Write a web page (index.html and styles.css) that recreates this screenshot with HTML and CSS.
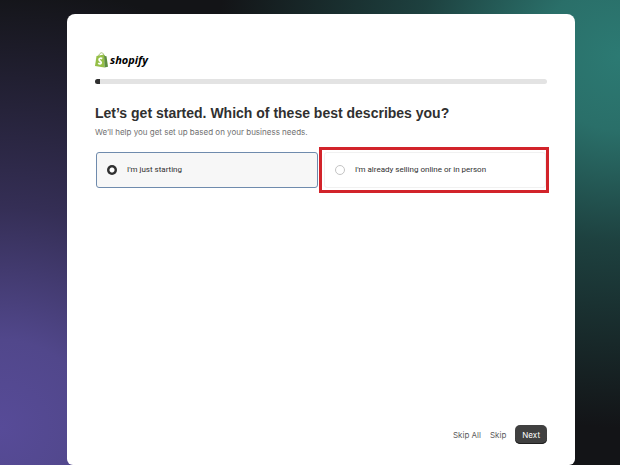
FILE: index.html
```
<!DOCTYPE html>
<html lang="en">
<head>
  <meta charset="utf-8">
  <meta name="viewport" content="width=device-width, initial-scale=1">
  <title>Shopify setup</title>
  <link rel="stylesheet" href="styles.css">
</head>
<body>
  <main class="card">
    <header class="brand">
      <svg class="brand-bag" viewBox="0 0 26 32" aria-hidden="true">
        <path d="M7 9C8 4 11 1.500 13.500 1.500S17 4 17.500 8" fill="none" stroke="#8fb052" stroke-width="1.500"/>
        <path d="M3 8L18 5L19 31L0 28Z" fill="#95bf47"/>
        <path d="M18 5L20 8L23 8.500L26 29.500L19 31Z" fill="#5e8e3e"/>
        <path d="M14.500 13.200C10.500 11.300 7.500 13.500 8.300 16C9 18.500 13 18.800 12.500 21.800C12 24.500 8.500 24 6.500 22.300" fill="none" stroke="#fff" stroke-width="3.500"/>
      </svg>
      <span class="brand-name">shopify</span>
    </header>
    <div class="progress" role="progressbar" aria-label="Setup progress" aria-valuenow="1" aria-valuemin="0" aria-valuemax="100"><div class="progress-fill"></div></div>
    <h1 class="title">Let’s get started. Which of these best describes you?</h1>
    <p class="subtitle">We’ll help you get set up based on your business needs.</p>
    <form class="form">
      <div class="options">
        <label class="option option-selected">
          <input class="radio" type="radio" name="stage" value="new" checked>
          <span>I'm just starting</span>
        </label>
        <label class="option option-highlighted">
          <input class="radio" type="radio" name="stage" value="selling">
          <span>I'm already selling online or in person</span>
        </label>
      </div>
      <footer class="actions">
        <button class="link-button" type="button">Skip All</button>
        <button class="link-button" type="button">Skip</button>
        <button class="next-button" type="button">Next</button>
      </footer>
    </form>
  </main>
</body>
</html>
```
FILE: styles.css
```
* {
  box-sizing: border-box;
}

body {
  margin: 0;
  min-height: 100vh;
  padding: 14px 45px 0 67px;
  display: flex;
  font-family: Inter, "Liberation Sans", sans-serif;
  font-size: 8px;
  line-height: 12px;
  color: #303030;
  background:
    radial-gradient(ellipse 65% 80% at 100% 12%, #2c7a73 0%, #2a6f69 20%, rgba(33, 80, 77, 0.75) 50%, rgba(19, 20, 23, 0) 100%),
    radial-gradient(ellipse 75% 95% at 0% 92%, #574b98 0%, #51478b 20%, rgba(61, 53, 101, 0.8) 50%, rgba(19, 20, 23, 0) 100%),
    #131417;
}

.card {
  flex: 1;
  min-width: 0;
  display: flex;
  flex-direction: column;
  padding: 36px 28px 21px;
  background: #fff;
  border-radius: 8px 8px 6px 6px;
}

.brand {
  display: flex;
  align-items: center;
  gap: 2px;
  height: 20px;
}

.brand-bag {
  width: 13px;
  height: 16px;
}

.brand-name {
  font: italic 700 11px/16px "Open Sans", "Noto Sans", sans-serif;
  color: #000;
}

.progress {
  margin-top: 9px;
  height: 5px;
  border-radius: 3px;
  background: #e3e3e3;
  overflow: hidden;
}

.progress-fill {
  width: 1%;
  height: 100%;
  background: #303030;
}

.title {
  margin: 19px 0 0;
  font-family: "Liberation Sans", Arial, sans-serif;
  font-size: 14px;
  line-height: 20px;
  font-weight: 700;
}

.subtitle {
  margin: 3px 0 0;
  color: #707070;
}

.form {
  flex: 1;
  display: flex;
  flex-direction: column;
  justify-content: space-between;
  margin-top: 14px;
}

.options {
  display: grid;
  grid-template-columns: 1fr 1fr;
  gap: 6px;
  padding: 0 1px;
}

.option {
  position: relative;
  display: flex;
  align-items: center;
  gap: 10px;
  height: 36px;
  padding: 0 10px;
  border: 1px solid #f1f1f1;
  border-radius: 3px;
  font-family: Roboto, sans-serif;
}

.option-selected {
  background: #f7f7f7;
  border-color: #6f8bad;
}

.option-highlighted::after {
  content: "";
  position: absolute;
  inset: -6px -4px -6px -6px;
  border: 3px solid #d2232a;
}

.radio {
  appearance: none;
  flex: none;
  width: 10px;
  height: 10px;
  margin: 0;
  border: 1px solid #c4c4c4;
  border-radius: 50%;
  background: #fff;
}

.radio:checked {
  border: 0;
  background: radial-gradient(circle, #fff 2px, #303030 3px);
}

.actions {
  display: flex;
  justify-content: flex-end;
  align-items: center;
  gap: 9px;
}

.link-button,
.next-button {
  padding: 0;
  border: 0;
  font: inherit;
  background: none;
  color: #5c5c5c;
}

.next-button {
  height: 19px;
  padding: 0 7px;
  border-radius: 5px;
  background: #404040;
  box-shadow: inset 0 -1px 0 #1f1f1f;
  color: #fff;
}
```
